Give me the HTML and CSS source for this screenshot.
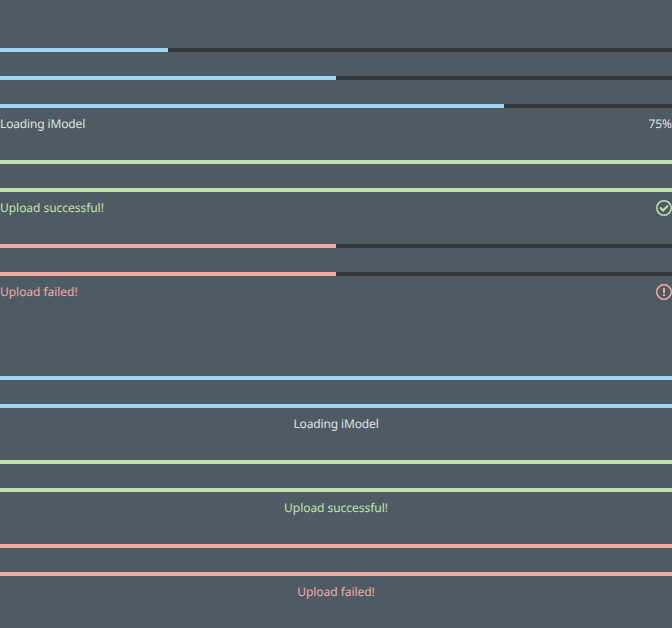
FILE: index.html
```html
<!DOCTYPE html>
<html lang="en">
<head>
<meta charset="utf-8">
<title>Linear progress</title>
<link rel="stylesheet" href="styles.css">
</head>
<body>
<section class="group">
  <div class="progress"><div class="track"><div class="fill" style="width:25%"></div></div></div>
  <div class="progress"><div class="track"><div class="fill" style="width:50%"></div></div></div>
  <div class="progress"><div class="track"><div class="fill" style="width:75%"></div></div><div class="label"><span class="loading">Loading iModel</span><span>75%</span></div></div>
  <div class="progress positive"><div class="track"><div class="fill"></div></div></div>
  <div class="progress positive"><div class="track"><div class="fill"></div></div><div class="label"><span>Upload successful!</span>
    <svg class="icon" viewBox="0 0 16 16"><path d="M8 1.5A6.5 6.5 0 1 1 1.5 8 6.508 6.508 0 0 1 8 1.5M8 0a8 8 0 1 0 8 8 8 8 0 0 0-8-8zm4.7 6.2-1.4-1.4L7 9.1 4.7 6.8 3.3 8.2 7 11.9z"/></svg></div></div>
  <div class="progress negative"><div class="track"><div class="fill" style="width:50%"></div></div></div>
  <div class="progress negative"><div class="track"><div class="fill" style="width:50%"></div></div><div class="label"><span>Upload failed!</span>
    <svg class="icon" viewBox="0 0 16 16"><path d="M8 1.5A6.5 6.5 0 1 1 1.5 8 6.508 6.508 0 0 1 8 1.5M8 0a8 8 0 1 0 8 8 8 8 0 0 0-8-8zM7 4h2v5H7zM7 10h2v2H7z"/></svg></div></div>
</section>
<section class="group">
  <div class="progress"><div class="track"><div class="fill"></div></div></div>
  <div class="progress"><div class="track"><div class="fill"></div></div><div class="label centered"><span class="loading">Loading iModel</span></div></div>
  <div class="progress positive"><div class="track"><div class="fill"></div></div></div>
  <div class="progress positive"><div class="track"><div class="fill"></div></div><div class="label centered"><span>Upload successful!</span></div></div>
  <div class="progress negative"><div class="track"><div class="fill"></div></div></div>
  <div class="progress negative"><div class="track"><div class="fill"></div></div><div class="label centered"><span>Upload failed!</span></div></div>
</section>
</body>
</html>
```

FILE: styles.css
```css
body {
  margin: 0;
  padding: 48px 0 0;
  background: #4f5b63;
  color: #dfe2e4;
  font: 12px/16px "Noto Sans", "Open Sans", sans-serif;
  letter-spacing: -0.04px;
  text-rendering: geometricPrecision;
}
.group {
  display: flex;
  flex-direction: column;
  gap: 24px;
}
.group + .group {
  margin-top: 72px;
}
.progress {
  --accent: #a3d5f5;
}
.positive {
  --accent: #c3e1af;
  color: #c3e1af;
}
.negative {
  --accent: #f4a9a9;
  color: #f4a9a9;
}
.track {
  height: 4px;
  background: #30383d;
}
.fill {
  height: 4px;
  background: var(--accent);
}
.label {
  display: flex;
  justify-content: space-between;
  align-items: center;
  padding: 8px 0 4px;
}
.loading {
  letter-spacing: -0.14px;
}
.centered {
  justify-content: center;
}
.icon {
  width: 16px;
  height: 16px;
  fill: currentColor;
}
```
